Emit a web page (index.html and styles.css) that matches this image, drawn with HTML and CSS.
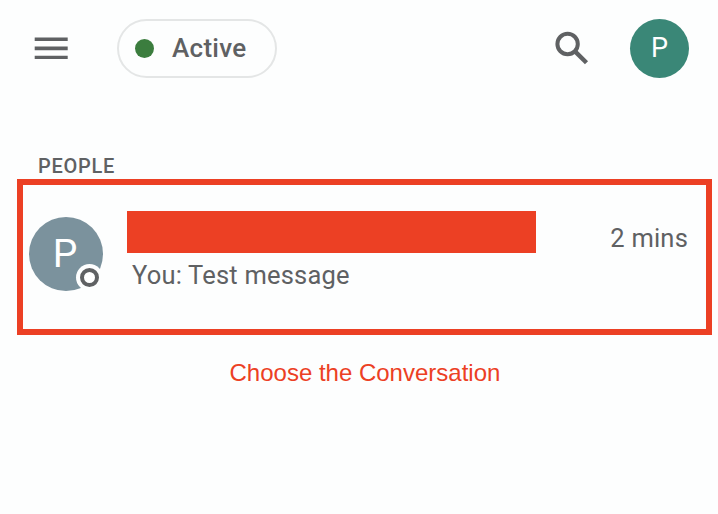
FILE: index.html
```
<!DOCTYPE html>
<html lang="en">
<head>
    <meta charset="UTF-8">
    <title>Chat</title>
    <link rel="stylesheet" href="styles.css">
</head>
<body>
    <header class="top-bar">
        <svg class="menu-icon" width="34" height="22" viewBox="0 0 34 22">
            <path d="M.7 2.3h33M.7 11.4h33M.7 20.5h33" stroke="#5f6163" stroke-width="3.6"/>
        </svg>
        <div class="status">
            <span class="status-dot"></span>
            <span class="status-text">Active</span>
        </div>
        <svg class="search-icon" width="34" height="34" viewBox="0 0 34 34" fill="none" stroke="#5f6163">
            <circle cx="12.6" cy="13" r="10.2" stroke-width="4"/>
            <path d="M20 20.4L31.5 31.7" stroke-width="4.4"/>
        </svg>
        <div class="account">P</div>
    </header>

    <h2 class="section-title">PEOPLE</h2>

    <div class="conversation">
        <div class="avatar">
            P
            <span class="presence"></span>
        </div>
        <div class="details">
            <div class="name"></div>
            <div class="message">You: Test message</div>
        </div>
        <div class="time">2 mins</div>
    </div>

    <p class="caption">Choose the Conversation</p>
</body>
</html>
```
FILE: styles.css
```
body {
    margin: 0;
    background-color: #fdfefe;
    color: #5f6163;
    font-family: Roboto, sans-serif;
}

.top-bar {
    display: flex;
    align-items: center;
    height: 96px;
    padding: 0 29px 0 34px;
}

.menu-icon {
    margin-right: 49px;
}

.status {
    display: flex;
    align-items: center;
    box-sizing: border-box;
    width: 160px;
    height: 59px;
    margin-top: 1px;
    padding-left: 16px;
    border: 2px solid #e4e6e6;
    border-radius: 30px;
}

.status-dot {
    width: 19px;
    height: 19px;
    margin-right: 18px;
    border-radius: 50%;
    background-color: #3b7d3e;
}

.status-text {
    margin-top: -2px;
    font-size: 26px;
    font-weight: 500;
    letter-spacing: 0.3px;
}

.search-icon {
    margin-left: auto;
    margin-right: 41px;
}

.account {
    width: 59px;
    height: 59px;
    border-radius: 50%;
    background-color: #3a8777;
    color: #fff;
    font-size: 27px;
    line-height: 59px;
    text-align: center;
}

.section-title {
    margin: 58px 0 0 38px;
    font-size: 20px;
    font-weight: 500;
    line-height: 25px;
    letter-spacing: 0.7px;
}

.conversation {
    display: flex;
    box-sizing: border-box;
    width: 695px;
    height: 156px;
    margin-left: 17px;
    padding: 26px 18px 0 6px;
    border: 6px solid #ec4024;
}

.avatar {
    position: relative;
    width: 74px;
    height: 74px;
    margin: 6px 24px 0 0;
    border-radius: 50%;
    background-color: #7b929d;
    color: #fff;
    font-size: 39px;
    line-height: 75px;
    text-align: center;
    text-indent: -2px;
}

.presence {
    position: absolute;
    right: 4px;
    bottom: 4px;
    box-sizing: border-box;
    width: 19px;
    height: 19px;
    border: 4px solid #5f6163;
    border-radius: 50%;
    background-color: #fff;
    box-shadow: 0 0 0 4px #fdfefe;
}

.name {
    width: 409px;
    height: 42px;
    background-color: #ec4024;
}

.message {
    padding: 6px 0 0 5px;
    font-size: 25.5px;
    line-height: 32px;
    letter-spacing: 0.2px;
}

.time {
    margin: 11px 0 0 auto;
    font-size: 25.5px;
    line-height: 32px;
    letter-spacing: 0.2px;
}

.caption {
    margin: 24px 0 0 229.5px;
    color: #ec4024;
    font-family: "Liberation Sans", Arial, sans-serif;
    font-size: 24px;
    line-height: 28px;
}
```
